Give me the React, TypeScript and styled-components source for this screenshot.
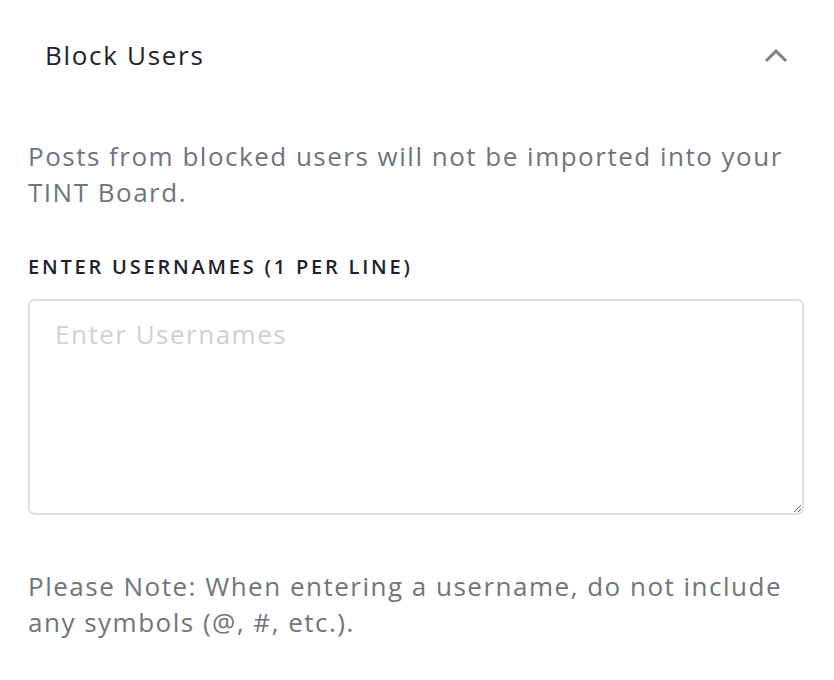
import React from "react";
import styled, { createGlobalStyle } from "styled-components";

const GlobalStyle = createGlobalStyle`
  html, body {
    margin: 0;
    padding: 0;
    background: #ffffff;
    font-family: "Open Sans", Lato, sans-serif;
  }
`;

const Panel = styled.section`
  width: 834px;
  height: 680px;
  box-sizing: border-box;
  padding: 0 30px 0 28px;
  background: #fff;
`;

const Header = styled.header`
  display: flex;
  align-items: center;
  justify-content: space-between;
  height: 110px;
  padding: 0 16px 0 17px;
`;

const Title = styled.h2`
  margin: 0;
  font-size: 26px;
  font-weight: 500;
  letter-spacing: 1.7px;
  color: #1e222a;
`;

const Chevron = styled.button`
  display: flex;
  align-items: center;
  justify-content: center;
  border: 0;
  background: transparent;
  padding: 0;
  width: 24px;
  height: 24px;
  cursor: pointer;
`;

const Body = styled.div`
  display: flex;
  flex-direction: column;
  padding-top: 28px;
`;

const Text = styled.p<{ $gap?: number }>`
  margin: 0 0 ${(p) => p.$gap ?? 0}px;
  font-size: 26px;
  line-height: 36px;
  letter-spacing: 1.5px;
  color: #70757c;
`;

const Label = styled.label`
  display: block;
  margin-bottom: 19px;
  font-size: 20px;
  line-height: 26px;
  font-weight: 600;
  letter-spacing: 2.8px;
  color: #1e222a;
`;

const Area = styled.textarea`
  display: block;
  box-sizing: border-box;
  width: 776px;
  height: 216px;
  margin-bottom: 53px;
  padding: 16px 25px;
  border: 2px solid #e0e0e0;
  border-radius: 7px;
  font-family: "Open Sans", Lato, sans-serif;
  font-size: 26px;
  line-height: 34px;
  letter-spacing: 1.5px;
  color: #1e222a;
  resize: vertical;
  outline: none;

  &::placeholder {
    color: #cfd1d4;
  }
`;

export default function App() {
  return (
    <>
      <GlobalStyle />
      <Panel>
        <Header>
          <Title>Block Users</Title>
          <Chevron aria-label="Collapse">
            <svg width="24" height="16" viewBox="0 0 24 16" fill="none">
              <path
                d="M3 13 L12 4 L21 13"
                stroke="#7a8088"
                strokeWidth="3"
                strokeLinecap="square"
              />
            </svg>
          </Chevron>
        </Header>
        <Body>
          <Text $gap={44}>
            Posts from blocked users will not be imported into your TINT Board.
          </Text>
          <Label htmlFor="usernames">ENTER USERNAMES (1 PER LINE)</Label>
          <Area id="usernames" placeholder="Enter Usernames" />
          <Text>
            Please Note: When entering a username, do not include any symbols
            (@, #, etc.).
          </Text>
        </Body>
      </Panel>
    </>
  );
}
